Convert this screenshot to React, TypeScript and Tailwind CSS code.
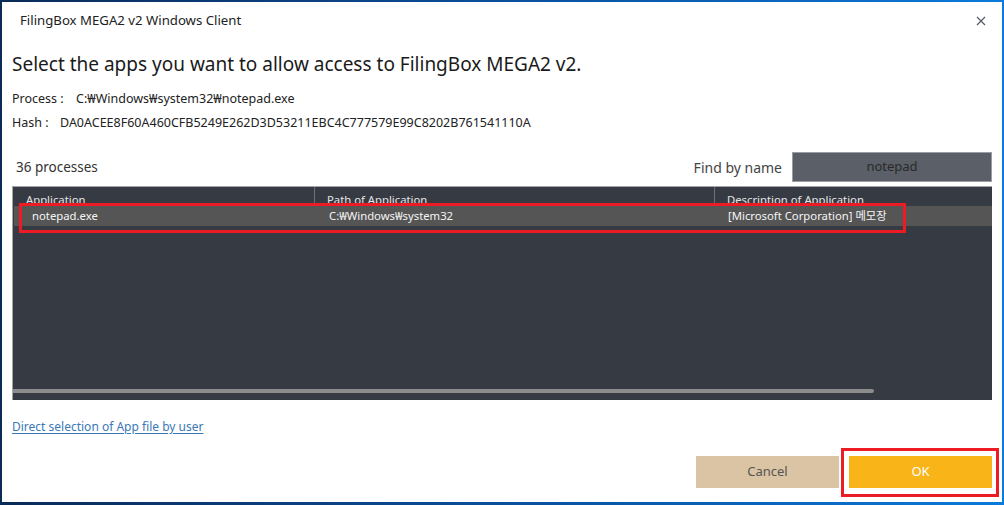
import React from "react";

const font = { fontFamily: '"Noto Sans", "Noto Sans CJK KR", sans-serif' };

function CloseIcon() {
  return (
    <svg width="10" height="10" viewBox="0 0 10 10" className="text-[#555b66]">
      <path d="M1 1 L9 9 M9 1 L1 9" stroke="currentColor" strokeWidth="1.2" />
    </svg>
  );
}

export default function App() {
  return (
    <div
      className="w-[1004px] h-[505px] pt-[2px] pb-[3px] px-[2px] bg-gradient-to-r from-[#0a2a58] via-[#0a4f9c] to-[#0b7ada]"
      style={font}
    >
      <div className="flex h-full w-full flex-col bg-white">
        <header className="flex h-[38px] items-center justify-between pl-[18px] pr-[16px]">
          <span className="text-[13.2px] text-[#222]">FilingBox MEGA2 v2 Windows Client</span>
          <CloseIcon />
        </header>

        <div className="flex flex-col px-[10px]">
          <h1 className="mt-[12px] text-[19px] leading-[24px] text-[#1a1a1a]">
            Select the apps you want to allow access to FilingBox MEGA2 v2.
          </h1>
          <div className="mt-[13px] flex text-[12.5px] leading-[20px] text-[#222]">
            <span className="w-[64px]">Process :</span>
            <span>C:₩Windows₩system32₩notepad.exe</span>
          </div>
          <div className="mt-[4px] flex text-[12.5px] leading-[20px] text-[#222]">
            <span className="w-[48px]">Hash :</span>
            <span>DA0ACEE8F60A460CFB5249E262D3D53211EBC4C777579E99C8202B761541110A</span>
          </div>

          <div className="mt-[19px] flex h-[30px] items-center justify-between">
            <span className="pl-[4px] text-[13.5px] text-[#333]">36 processes</span>
            <div className="flex items-center gap-[10px]">
              <span className="text-[14px] text-[#444]">Find by name</span>
              <div className="flex h-[30px] w-[200px] items-center justify-center border border-[#9a9da3] bg-[#5a5f68] text-[13px] text-[#2a2a2a]">
                notepad
              </div>
            </div>
          </div>

          <div className="relative mt-[4px] flex h-[214px] flex-col border-t border-l border-[#a5a5a5] bg-[#363a43] text-[11.3px]">
            <div className="flex h-[19px] overflow-hidden text-[#e4e4e4]">
              <div className="w-[301px] pl-[13px] pt-[5px] leading-[16px]">Application</div>
              <div className="w-[400px] border-l border-[#6c7079] pl-[12px] pt-[5px] leading-[16px]">Path of Application</div>
              <div className="flex-1 border-l border-[#6c7079] pl-[12px] pt-[5px] leading-[16px]">Description of Application</div>
            </div>
            <div className="ml-[1px] flex h-[20px] items-center bg-[#555555] text-[#f4f4f4]">
              <div className="w-[300px] pl-[18px]">notepad.exe</div>
              <div className="w-[400px] pl-[15px]">C:₩Windows₩system32</div>
              <div className="flex-1 pl-[14px]">[Microsoft Corporation] 메모장</div>
            </div>
            <div className="flex-1" />
            <div className="mb-[7px] h-[4px] w-[861px] rounded-r-sm bg-[#8c8c8c]" />
            <div className="pointer-events-none absolute left-[6px] top-[16px] h-[30px] w-[887px] border-[3px] border-[#ed1c24]" />
          </div>

          <a className="mt-[18px] self-start text-[12px] leading-[18px] text-[#3a78b5] underline underline-offset-2">
            Direct selection of App file by user
          </a>

          <div className="mt-[20px] flex justify-end gap-[10px]">
            <button className="h-[32px] w-[143px] bg-[#dac4a3] text-[13px] text-[#555]">Cancel</button>
            <div className="relative">
              <button className="h-[32px] w-[143px] bg-[#f9b417] text-[13px] text-white">OK</button>
              <div className="pointer-events-none absolute left-[-8px] top-[-8px] h-[49px] w-[158px] border-[3px] border-[#ed1c24]" />
            </div>
          </div>
        </div>
      </div>
    </div>
  );
}
